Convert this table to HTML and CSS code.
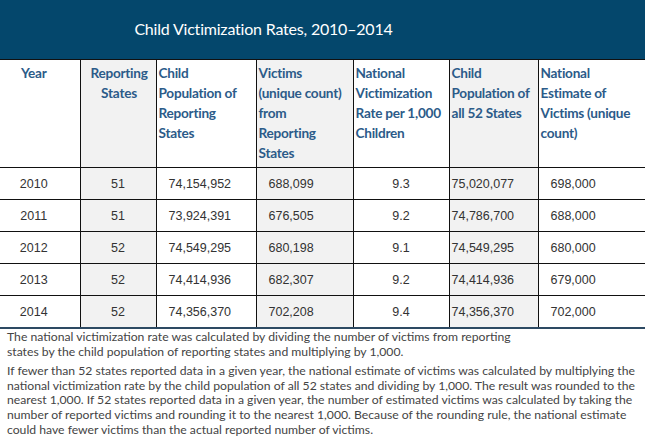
FILE: index.html
```html
<!DOCTYPE html>
<html>
<head>
<meta charset="utf-8">
<link rel="stylesheet" href="styles.css">
</head>
<body>
<div class="page">
  <header class="title-bar"><h1 class="title">Child Victimization Rates, 2010–2014</h1></header>
  <table class="data">
    <colgroup>
      <col class="c1"><col class="c2"><col class="c3"><col class="c4"><col class="c5"><col class="c6"><col class="c7">
    </colgroup>
    <thead>
      <tr>
        <th class="center first">Year</th>
        <th class="center shade">Reporting<br>States</th>
        <th>Child<br>Population of<br>Reporting<br>States</th>
        <th class="shade">Victims<br>(unique count)<br>from<br>Reporting<br>States</th>
        <th>National<br>Victimization<br>Rate per 1,000<br>Children</th>
        <th class="shade">Child<br>Population of<br>all 52 States</th>
        <th>National<br>Estimate of<br>Victims (unique<br>count)</th>
      </tr>
    </thead>
    <tbody>
      <tr><td class="center first">2010</td><td class="center shade">51</td><td class="pad">74,154,952</td><td class="pad shade">688,099</td><td class="center">9.3</td><td class="tight shade">75,020,077</td><td class="pad">698,000</td></tr>
      <tr><td class="center first">2011</td><td class="center shade">51</td><td class="pad">73,924,391</td><td class="pad shade">676,505</td><td class="center">9.2</td><td class="tight shade">74,786,700</td><td class="pad">688,000</td></tr>
      <tr><td class="center first">2012</td><td class="center shade">52</td><td class="pad">74,549,295</td><td class="pad shade">680,198</td><td class="center">9.1</td><td class="tight shade">74,549,295</td><td class="pad">680,000</td></tr>
      <tr><td class="center first">2013</td><td class="center shade">52</td><td class="pad">74,414,936</td><td class="pad shade">682,307</td><td class="center">9.2</td><td class="tight shade">74,414,936</td><td class="pad">679,000</td></tr>
      <tr><td class="center first">2014</td><td class="center shade">52</td><td class="pad">74,356,370</td><td class="pad shade">702,208</td><td class="center">9.4</td><td class="tight shade">74,356,370</td><td class="pad">702,000</td></tr>
    </tbody>
  </table>
  <div class="notes">
    <p class="note">The national victimization rate was calculated by dividing the number of victims from reporting<br>states by the child population of reporting states and multiplying by 1,000.</p>
    <p class="note">If fewer than 52 states reported data in a given year, the national estimate of victims was calculated by multiplying the<br>national victimization rate by the child population of all 52 states and dividing by 1,000. The result was rounded to the<br>nearest 1,000. If 52 states reported data in a given year, the number of estimated victims was calculated by taking the<br>number of reported victims and rounding it to the nearest 1,000. Because of the rounding rule, the national estimate<br>could have fewer victims than the actual reported number of victims.</p>
  </div>
</div>
</body>
</html>
```
FILE: styles.css
```css
html, body {
  margin: 0;
  padding: 0;
  background: #ffffff;
}
.page {
  width: 645px;
}
.title-bar {
  height: 59px;
  background: #04476c;
  display: flex;
  align-items: center;
  justify-content: center;
  padding-right: 118px;
  box-sizing: border-box;
}
.title {
  margin: 0;
  font-family: Lato, "Open Sans", sans-serif;
  font-weight: 400;
  font-size: 16px;
  letter-spacing: -0.2px;
  color: #ffffff;
  padding-bottom: 2px;
}
.data {
  width: 645px;
  border-collapse: collapse;
  table-layout: fixed;
  border-top: 1px solid #111;
  border-bottom: 2px solid #2d4a63;
}
.c1 { width: 80px; }
.c2 { width: 76px; }
.c3 { width: 100px; }
.c4 { width: 97px; }
.c5 { width: 96px; }
.c6 { width: 89px; }
.c7 { width: 107px; }
.data th {
  font-family: Lato, "Open Sans", sans-serif;
  font-weight: 700;
  font-size: 13.6px;
  letter-spacing: -0.25px;
  line-height: 20px;
  color: #2c5b89;
  text-align: left;
  vertical-align: top;
  white-space: nowrap;
  padding: 3px 0 0 2px;
  height: 104px;
  border-right: 1px solid #111;
  border-bottom: 1px solid #111;
}
.data td {
  font-family: "Liberation Sans", Arial, sans-serif;
  font-size: 12.5px;
  color: #333;
  height: 31px;
  padding: 0 2px;
  border-right: 1px solid #111;
  border-bottom: 1px solid #111;
}
.data tbody tr:last-child td { border-bottom: none; }
.data th:last-child, .data td:last-child { border-right: none; }
.data .center { text-align: center; }
.data .first { padding-right: 14px; }
.data .pad { padding-left: 12px; }
.data .tight { padding-left: 2px; }
.data .shade { background: #f2f2f2; }
.notes {
  padding: 1px 0 0 7px;
}
.note {
  margin: 0 0 5px 0;
  font-family: Lato, "Open Sans", sans-serif;
  font-size: 12.2px;
  line-height: 14.6px;
  color: #444;
  white-space: nowrap;
}
```
